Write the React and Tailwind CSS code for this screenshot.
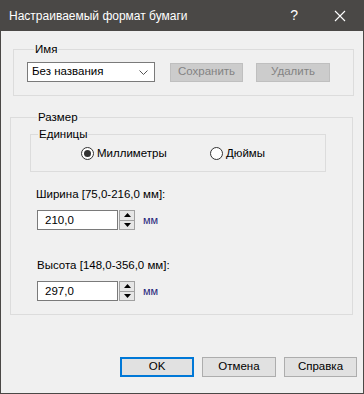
const font = { fontFamily: '"Liberation Sans", Arial, sans-serif' };

function Spinner() {
  return (
    <div className="flex flex-col w-[16px] h-[20px] border border-[#a0a0a0] bg-[#e6e6e6]">
      <div className="flex-1 flex items-center justify-center border-b border-[#a0a0a0]">
        <svg width="7" height="4" viewBox="0 0 7 4">
          <path d="M0 4 L3.5 0 L7 4 Z" fill="#000" />
        </svg>
      </div>
      <div className="flex-1 flex items-center justify-center">
        <svg width="7" height="4" viewBox="0 0 7 4">
          <path d="M0 0 L3.5 4 L7 0 Z" fill="#000" />
        </svg>
      </div>
    </div>
  );
}

function NumberField({ label, value, labelClass }) {
  return (
    <div className="flex flex-col">
      <div className={`h-[16px] leading-[16px] ${labelClass}`}>{label}</div>
      <div className="flex items-center mt-[8px] ml-[1px]">
        <div className="w-[81px] h-[20px] border border-[#7a7a7a] bg-white pl-[7px] leading-[18px]">
          {value}
        </div>
        <div className="ml-[1px]">
          <Spinner />
        </div>
        <div className="ml-[8px] text-[#25257a] text-[11px]">мм</div>
      </div>
    </div>
  );
}

function Radio({ checked, label }) {
  return (
    <div className="flex items-center">
      <div className="w-[13px] h-[13px] rounded-full border border-[#333] bg-white flex items-center justify-center">
        {checked && <div className="w-[7px] h-[7px] rounded-full bg-[#333]" />}
      </div>
      <span className="ml-[3px]">{label}</span>
    </div>
  );
}

export default function App() {
  return (
    <div
      className="w-[364px] h-[394px] flex flex-col bg-[#f0f0f0] border-x border-b border-[#4a4846] text-[11.5px] text-black"
      style={font}
    >
      <div className="h-[31px] shrink-0 bg-[#4a4846] flex items-center text-white pl-[9px] -mx-px">
        <span className="text-[12px]">Настраиваемый формат бумаги</span>
        <span className="ml-auto text-[14px] mr-[36px]">?</span>
        <svg width="12" height="12" viewBox="0 0 12 12" className="mr-[18px]">
          <path d="M1 1 L11 11 M11 1 L1 11" stroke="#fff" strokeWidth="1.1" />
        </svg>
      </div>

      <fieldset className="mt-[10px] ml-[12px] w-[341px] border border-[#dcdcdc] px-[13px] pt-[5px] pb-[13px]">
        <legend className="ml-[7px] px-[1px] h-[16px] leading-[16px]">Имя</legend>
        <div className="flex items-center">
          <div className="w-[128px] h-[20px] border border-[#7a7a7a] bg-white flex items-center pl-[4px] pr-[6px]">
            <span>Без названия</span>
            <svg width="9" height="5" viewBox="0 0 9 5" className="ml-auto">
              <path d="M0.5 0.5 L4.5 4.5 L8.5 0.5" stroke="#555" fill="none" />
            </svg>
          </div>
          <div className="ml-[15px] w-[73px] h-[19px] bg-[#cccccc] border border-[#bfbfbf] text-[#838383] flex items-center justify-center">
            Сохранить
          </div>
          <div className="ml-[13px] w-[74px] h-[19px] bg-[#cccccc] border border-[#bfbfbf] text-[#838383] flex items-center justify-center">
            Удалить
          </div>
        </div>
      </fieldset>

      <fieldset className="mt-[13px] ml-[9px] w-[343px] h-[206px] border border-[#dcdcdc] pl-[19px] pt-[1px]">
        <legend className="ml-[7px] px-[1px] h-[16px] leading-[16px]">Размер</legend>
        <fieldset className="w-[296px] h-[46px] border border-[#dcdcdc]">
          <legend className="ml-[7px] px-[1px] h-[16px] leading-[16px]">Единицы</legend>
          <div className="flex items-center pl-[50px] pt-[3px]">
            <div className="w-[129px]">
              <Radio checked label="Миллиметры" />
            </div>
            <Radio label="Дюймы" />
          </div>
        </fieldset>
        <div className="mt-[14px] ml-[-19px] pl-[25px] flex flex-col">
          <NumberField label="Ширина [75,0-216,0 мм]:" value="210,0" labelClass="" />
          <div className="mt-[27px]">
            <NumberField label="Высота [148,0-356,0 мм]:" value="297,0" labelClass="ml-[1px]" />
          </div>
        </div>
      </fieldset>

      <div className="mt-auto mb-[16px] flex justify-end gap-[8px] pr-[6px]">
        <div className="w-[74px] h-[20px] border-2 border-[#0078d7] bg-[#e1e1e1] flex items-center justify-center">
          OK
        </div>
        <div className="w-[74px] h-[20px] border border-[#adadad] bg-[#e1e1e1] flex items-center justify-center">
          Отмена
        </div>
        <div className="w-[73px] h-[20px] border border-[#adadad] bg-[#e1e1e1] flex items-center justify-center">
          Справка
        </div>
      </div>
    </div>
  );
}
